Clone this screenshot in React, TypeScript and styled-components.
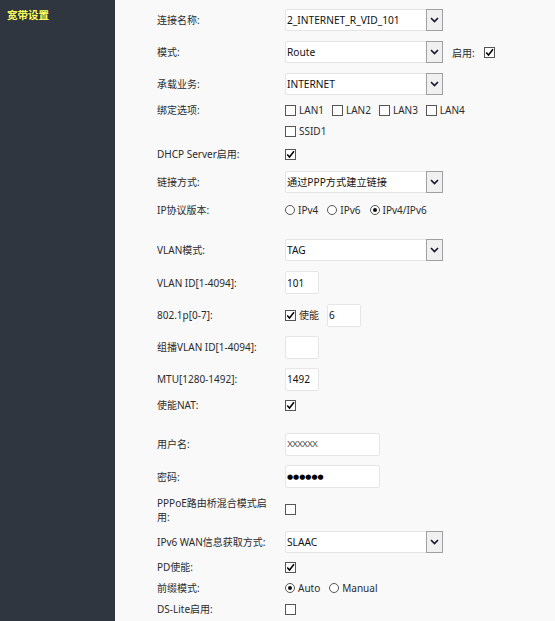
import React from "react";
import styled, { createGlobalStyle } from "styled-components";

const GlobalStyle = createGlobalStyle`
  html, body {
    margin: 0;
    padding: 0;
    background: #f9f9f9;
  }
  body {
    font-family: "Noto Sans", "Noto Sans CJK SC", sans-serif;
    font-size: 10px;
    color: #2b2b2b;
    overflow: hidden;
  }
`;

const Page = styled.div`
  display: flex;
  min-height: 621px;
`;

const Sidebar = styled.aside`
  width: 115px;
  flex-shrink: 0;
  background: #2f3640;
  padding: 8px 0 0 7px;
  box-sizing: border-box;
`;

const SideTitle = styled.div`
  color: #ffff5a;
  font-weight: bold;
  font-size: 10.5px;
  line-height: 14px;
`;

const Main = styled.main`
  flex: 1;
  padding: 4px 0 0 42px;
  display: flex;
  flex-direction: column;
`;

const Row = styled.div<{ $h: number; $top?: boolean }>`
  display: flex;
  align-items: ${(p) => (p.$top ? "flex-start" : "center")};
  height: ${(p) => p.$h}px;
`;

const Spacer = styled.div<{ $h: number }>`
  height: ${(p) => p.$h}px;
`;

const Label = styled.div<{ $pad?: number }>`
  width: 128px;
  flex-shrink: 0;
  padding-right: 18px;
  box-sizing: border-box;
  line-height: 14px;
  padding-top: ${(p) => p.$pad ?? 0}px;
`;

const Controls = styled.div`
  display: flex;
  align-items: center;
  flex-wrap: wrap;
  row-gap: 7px;
  width: 200px;
  padding-top: 3px;
`;

const SelectBox = styled.div`
  width: 158px;
  height: 22px;
  box-sizing: border-box;
  display: flex;
  align-items: stretch;
  background: #fff;
  border: 1px solid #e4e4e4;
  border-radius: 2px;
  color: #111;
`;

const SelectText = styled.div`
  flex: 1;
  display: flex;
  align-items: center;
  padding-left: 1px;
  line-height: 14px;
  font-size: 10.2px;
`;

const Arrow = styled.div`
  width: 15px;
  margin: -1px -1px -1px 0;
  background: #f0f0f0;
  border: 1px solid #a0a0a0;
  display: flex;
  align-items: center;
  justify-content: center;
`;

const TextBox = styled.div<{ $w: number }>`
  width: ${(p) => p.$w}px;
  height: 23px;
  box-sizing: border-box;
  background: #fff;
  border: 1px solid #e6e6e6;
  border-radius: 2px;
  display: flex;
  align-items: center;
  padding-left: 1px;
  color: #111;
  line-height: 14px;
`;

const Placeholder = styled.span`
  font-family: "Liberation Sans", sans-serif;
  font-size: 9px;
  color: #555;
  letter-spacing: -1px;
`;

const Dots = styled.span`
  font-family: "DejaVu Sans", sans-serif;
  font-size: 7px;
  letter-spacing: 0px;
  color: #000;
`;

const Box = styled.span`
  width: 11px;
  height: 11px;
  box-sizing: border-box;
  border: 1px solid #555;
  background: #fff;
  display: inline-flex;
  align-items: center;
  justify-content: center;
  flex-shrink: 0;
`;

const Round = styled.span`
  width: 10px;
  height: 10px;
  box-sizing: border-box;
  border: 1px solid #555;
  border-radius: 50%;
  background: #fff;
  display: inline-flex;
  align-items: center;
  justify-content: center;
  flex-shrink: 0;
`;

const Dot = styled.span`
  width: 4px;
  height: 4px;
  border-radius: 50%;
  background: #111;
`;

const Option = styled.span<{ $gap?: number }>`
  display: inline-flex;
  align-items: center;
  gap: 3px;
  margin-right: ${(p) => p.$gap ?? 8}px;
  line-height: 14px;
`;

const InlineLabel = styled.span`
  margin: 0 9px 0 9px;
`;

function Chevron() {
  return (
    <svg width="9" height="6" viewBox="0 0 9 6">
      <path d="M1 1 L4.5 4.5 L8 1" fill="none" stroke="#14142e" strokeWidth="1.6" />
    </svg>
  );
}

function Select({ value }: { value: string }) {
  return (
    <SelectBox>
      <SelectText>{value}</SelectText>
      <Arrow>
        <Chevron />
      </Arrow>
    </SelectBox>
  );
}

function CheckBox({ checked }: { checked?: boolean }) {
  return (
    <Box>
      {checked && (
        <svg width="9" height="9" viewBox="0 0 9 9">
          <path d="M1.2 4.6 L3.5 7 L8 1.2" fill="none" stroke="#000" strokeWidth="1.5" />
        </svg>
      )}
    </Box>
  );
}

function Radio({ checked }: { checked?: boolean }) {
  return <Round>{checked && <Dot />}</Round>;
}

export default function App() {
  return (
    <>
      <GlobalStyle />
      <Page>
        <Sidebar>
          <SideTitle>宽带设置</SideTitle>
        </Sidebar>
        <Main>
          <Row $h={32}>
            <Label>连接名称:</Label>
            <Select value="2_INTERNET_R_VID_101" />
          </Row>
          <Row $h={32}>
            <Label>模式:</Label>
            <Select value="Route" />
            <InlineLabel>启用:</InlineLabel>
            <CheckBox checked />
          </Row>
          <Row $h={32}>
            <Label>承载业务:</Label>
            <Select value="INTERNET" />
          </Row>
          <Row $h={42} $top>
            <Label $pad={3}>绑定选项:</Label>
            <Controls>
              <Option><CheckBox />LAN1</Option>
              <Option><CheckBox />LAN2</Option>
              <Option><CheckBox />LAN3</Option>
              <Option><CheckBox />LAN4</Option>
              <Option><CheckBox />SSID1</Option>
            </Controls>
          </Row>
          <Row $h={24}>
            <Label>DHCP Server启用:</Label>
            <CheckBox checked />
          </Row>
          <Row $h={32}>
            <Label>链接方式:</Label>
            <Select value="通过PPP方式建立链接" />
          </Row>
          <Row $h={24}>
            <Label>IP协议版本:</Label>
            <Option $gap={9}><Radio />IPv4</Option>
            <Option $gap={9}><Radio />IPv6</Option>
            <Option><Radio checked />IPv4/IPv6</Option>
          </Row>
          <Spacer $h={12} />
          <Row $h={32}>
            <Label>VLAN模式:</Label>
            <Select value="TAG" />
          </Row>
          <Row $h={33}>
            <Label>VLAN ID[1-4094]:</Label>
            <TextBox $w={34}>101</TextBox>
          </Row>
          <Row $h={32}>
            <Label>802.1p[0-7]:</Label>
            <Option $gap={8}><CheckBox checked />使能</Option>
            <TextBox $w={34}>6</TextBox>
          </Row>
          <Row $h={32}>
            <Label>组播VLAN ID[1-4094]:</Label>
            <TextBox $w={34} />
          </Row>
          <Row $h={32}>
            <Label>MTU[1280-1492]:</Label>
            <TextBox $w={34}>1492</TextBox>
          </Row>
          <Row $h={20}>
            <Label>使能NAT:</Label>
            <CheckBox checked />
          </Row>
          <Spacer $h={13} />
          <Row $h={32}>
            <Label>用户名:</Label>
            <TextBox $w={95}>
              <Placeholder>XXXXXX</Placeholder>
            </TextBox>
          </Row>
          <Row $h={33}>
            <Label>密码:</Label>
            <TextBox $w={95}>
              <Dots>●●●●●●</Dots>
            </TextBox>
          </Row>
          <Row $h={33}>
            <Label>PPPoE路由桥混合模式启用:</Label>
            <CheckBox />
          </Row>
          <Row $h={32}>
            <Label>IPv6 WAN信息获取方式:</Label>
            <Select value="SLAAC" />
          </Row>
          <Row $h={18}>
            <Label>PD使能:</Label>
            <CheckBox checked />
          </Row>
          <Row $h={24}>
            <Label>前缀模式:</Label>
            <Option $gap={9}><Radio checked />Auto</Option>
            <Option><Radio />Manual</Option>
          </Row>
          <Row $h={18}>
            <Label>DS-Lite启用:</Label>
            <CheckBox />
          </Row>
        </Main>
      </Page>
    </>
  );
}
